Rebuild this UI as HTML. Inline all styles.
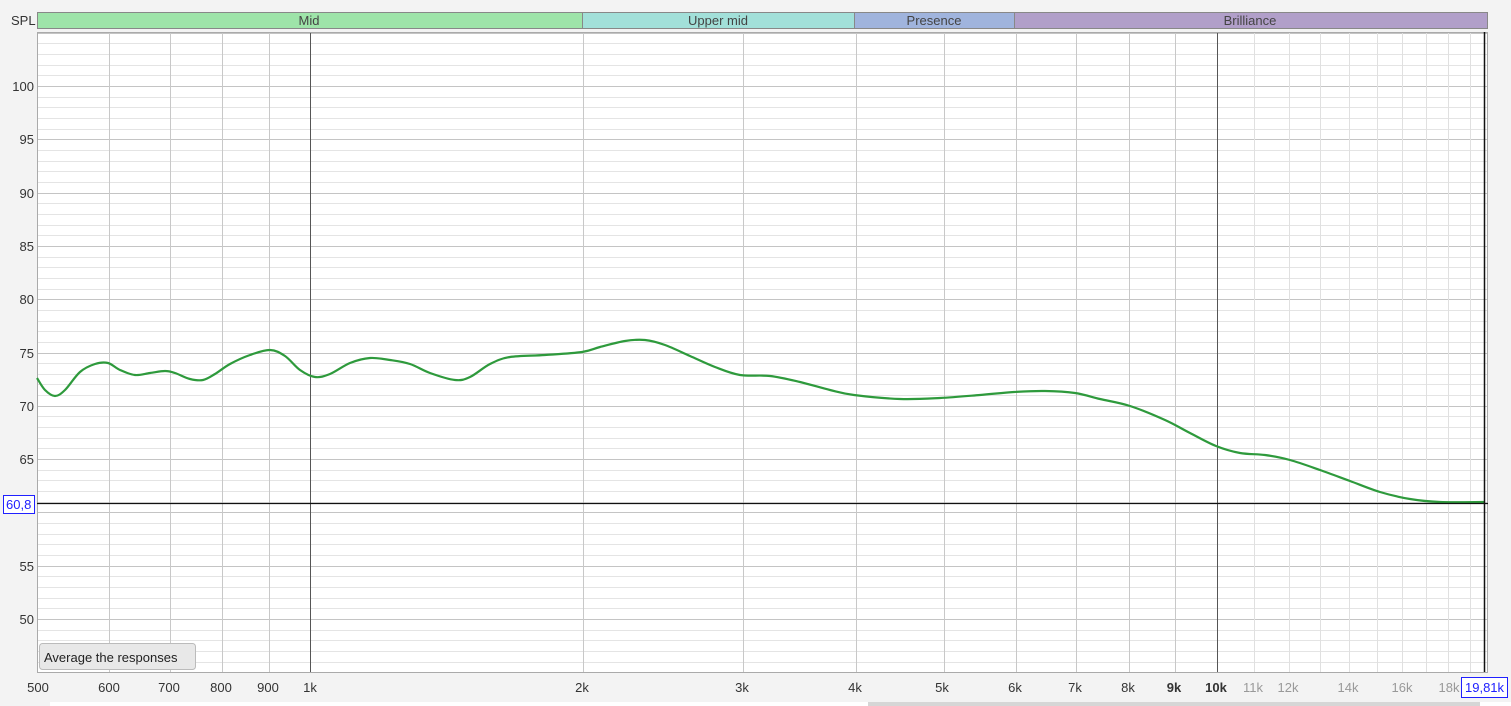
<!DOCTYPE html>
<html><head><meta charset="utf-8"><style>
html,body{margin:0;padding:0;background:#f3f3f3;width:1511px;height:706px;overflow:hidden;font-family:"Liberation Sans","DejaVu Sans",sans-serif}
svg{display:block}
text{font-family:"Liberation Sans","DejaVu Sans",sans-serif;font-size:13px;fill:#333}
</style></head><body>
<svg width="1511" height="706" viewBox="0 0 1511 706" xmlns="http://www.w3.org/2000/svg">
<rect x="0" y="0" width="1511" height="706" fill="#f3f3f3"/>
<rect x="50" y="702" width="1461" height="4" fill="#ffffff"/>
<rect x="868" y="702" width="612" height="4" fill="#d6d6d6"/>
<rect x="37.5" y="12.5" width="545" height="16" fill="#9ee4a9" stroke="#888"/>
<rect x="582.5" y="12.5" width="272" height="16" fill="#a2e0d9" stroke="#888"/>
<rect x="854.5" y="12.5" width="160" height="16" fill="#a0b4dd" stroke="#888"/>
<rect x="1014.5" y="12.5" width="473" height="16" fill="#b19fc9" stroke="#888"/>
<text x="309" y="25" text-anchor="middle" style="fill:#444">Mid</text>
<text x="718" y="25" text-anchor="middle" style="fill:#444">Upper mid</text>
<text x="934" y="25" text-anchor="middle" style="fill:#444">Presence</text>
<text x="1250" y="25" text-anchor="middle" style="fill:#444">Brilliance</text>
<text x="11" y="25">SPL</text>
<rect x="37.5" y="32.5" width="1450" height="640" fill="#fff" stroke="#aaa"/>
<g id="grid"></g>
<path id="curve" fill="none" stroke="#2e9a3c" stroke-width="2.2" stroke-linejoin="round" d=""/>
<line x1="37" y1="503.5" x2="1488" y2="503.5" stroke="#111" stroke-width="1.2"/>
<line x1="1484.5" y1="32" x2="1484.5" y2="672" stroke="#111" stroke-width="1.5"/>
<g text-anchor="end">
<text x="34" y="91">100</text><text x="34" y="144">95</text><text x="34" y="198">90</text><text x="34" y="251">85</text><text x="34" y="304">80</text><text x="34" y="358">75</text><text x="34" y="411">70</text><text x="34" y="464">65</text><text x="34" y="571">55</text><text x="34" y="624">50</text>
</g>
<rect x="3.5" y="495.5" width="31" height="18" fill="#fff" stroke="#2020ff"/>
<text x="6" y="509" style="fill:#2020ff">60,8</text>
<rect x="39.5" y="643.5" width="156" height="26" rx="3" fill="#e8e8e8" stroke="#bbb"/>
<text x="44" y="662" style="fill:#222">Average the responses</text>
<g text-anchor="middle">
<text x="38" y="692">500</text><text x="109" y="692">600</text><text x="169" y="692">700</text><text x="221" y="692">800</text><text x="268" y="692">900</text><text x="310" y="692">1k</text><text x="582" y="692">2k</text><text x="742" y="692">3k</text><text x="855" y="692">4k</text><text x="942" y="692">5k</text><text x="1015" y="692">6k</text><text x="1075" y="692">7k</text><text x="1128" y="692">8k</text>
<text x="1174" y="692" font-weight="bold">9k</text><text x="1216" y="692" font-weight="bold">10k</text>
<text x="1253" y="692" style="fill:#999">11k</text><text x="1288" y="692" style="fill:#999">12k</text><text x="1348" y="692" style="fill:#999">14k</text><text x="1402" y="692" style="fill:#999">16k</text><text x="1449" y="692" style="fill:#999">18k</text>
</g>
<rect x="1461.5" y="677.5" width="46" height="20" fill="#fff" stroke="#2020ff"/>
<text x="1465" y="692" style="fill:#2020ff">19,81k</text>
</svg>
<script>
var g=document.getElementById('grid'),h='';
function X(f){return 37+273*Math.log2(f/500);}
for(var d=46;d<=105;d++){var y=Math.round(619-(d-50)*10.66)+0.5;var maj=d%5==0;h+='<line x1="38" x2="1487" y1="'+y+'" y2="'+y+'" stroke="'+(maj?'#c4c4c4':'#e4e4e4')+'"/>';}
[600,700,800,900,1000,2000,3000,4000,5000,6000,7000,8000,9000,10000,11000,12000,13000,14000,15000,16000,17000,18000,19000].forEach(function(f){var x=Math.round(X(f))+0.5;var dark=(f==1000||f==10000);h+='<line x1="'+x+'" x2="'+x+'" y1="33" y2="672" stroke="'+(dark?'#555':(f>10000?'#e0e0e0':'#c8c8c8'))+'"/>';});
g.innerHTML=h;
var p=[[37,378],[45,390],[55,396],[65,390],[80,372],[95,364],[108,363],[120,370],[135,375],[150,373],[165,371],[175,373],[190,379],[203,380],[215,374],[230,364],[250,355],[270,350],[285,356],[300,370],[315,377],[330,374],[350,363],[370,358],[390,360],[410,364],[430,373],[455,380],[470,377],[490,364],[510,357],[545,355],[582,352],[600,347],[625,341],[645,340],[665,345],[690,356],[715,367],[740,375],[770,376],[800,382],[830,390],[854,395],[900,399],[940,398],[980,395],[1014,392],[1045,391],[1075,393],[1100,399],[1130,406],[1165,420],[1190,433],[1216,446],[1240,453],[1265,455],[1290,460],[1320,470],[1350,481],[1380,492],[1410,499],[1440,502],[1484,502]];
var d='M'+p[0][0]+','+p[0][1];
for(var i=0;i<p.length-1;i++){var a=p[Math.max(i-1,0)],b=p[i],c=p[i+1],e=p[Math.min(i+2,p.length-1)];
d+=' C'+(b[0]+(c[0]-a[0])/6)+','+(b[1]+(c[1]-a[1])/6)+' '+(c[0]-(e[0]-b[0])/6)+','+(c[1]-(e[1]-b[1])/6)+' '+c[0]+','+c[1];}
document.getElementById('curve').setAttribute('d',d);
</script>
</body></html>
